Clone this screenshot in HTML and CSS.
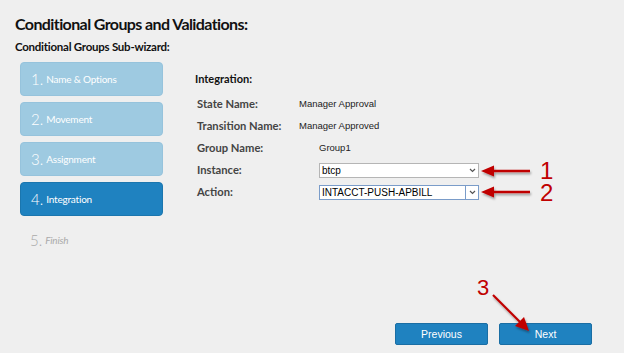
FILE: index.html
```html
<!doctype html>
<html lang="en">
<head>
  <meta charset="utf-8">
  <title>Conditional Groups and Validations</title>
  <link rel="stylesheet" href="styles.css">
</head>
<body>
  <div class="page">
    <h1 class="page-title">Conditional Groups and Validations:</h1>
    <h2 class="sub-title">Conditional Groups Sub-wizard:</h2>

    <div class="wizard">
      <div class="steps">
        <div class="step done"><span class="num">1.</span> Name &amp; Options</div>
        <div class="step done"><span class="num">2.</span> Movement</div>
        <div class="step done"><span class="num">3.</span> Assignment</div>
        <div class="step active"><span class="num">4.</span> Integration</div>
        <div class="step todo"><span class="num">5.</span> <em>Finish</em></div>
      </div>

      <div class="panel">
        <div class="panel-title">Integration:</div>
        <div class="row">
          <div class="label">State Name:</div>
          <div class="value">Manager Approval</div>
        </div>
        <div class="row">
          <div class="label">Transition Name:</div>
          <div class="value">Manager Approved</div>
        </div>
        <div class="row">
          <div class="label">Group Name:</div>
          <div class="value indent">Group1</div>
        </div>
        <div class="row">
          <div class="label">Instance:</div>
          <div class="select">
            <span class="select-text">btcp</span>
            <span class="select-arrow"><svg width="7" height="5" viewBox="0 0 7 5"><path d="M1 1 L3.5 3.5 L6 1" fill="none" stroke="#555" stroke-width="1.2"/></svg></span>
          </div>
        </div>
        <div class="row">
          <div class="label">Action:</div>
          <div class="select focused">
            <span class="select-text">INTACCT-PUSH-APBILL</span>
            <span class="select-arrow split"><svg width="7" height="5" viewBox="0 0 7 5"><path d="M1 1 L3.5 3.5 L6 1" fill="none" stroke="#555" stroke-width="1.2"/></svg></span>
          </div>
        </div>
      </div>
    </div>

    <div class="actions">
      <button class="btn">Previous</button>
      <button class="btn">Next</button>
    </div>

    <!-- callout annotations drawn over the screenshot -->
    <svg class="callouts" width="624" height="353" viewBox="0 0 624 353">
      <defs>
        <filter id="shadow" x="-20%" y="-50%" width="140%" height="200%">
          <feDropShadow dx="1" dy="2" stdDeviation="1.2" flood-color="#000" flood-opacity="0.35"/>
        </filter>
      </defs>
      <g fill="#c00000" stroke="#c00000" filter="url(#shadow)">
        <line x1="530" y1="171" x2="492" y2="171" stroke-width="2.4"/>
        <path d="M481 171 L494 165.5 L494 176.5 Z" stroke="none"/>
        <line x1="530" y1="192" x2="492" y2="192" stroke-width="2.4"/>
        <path d="M481 192 L494 186.5 L494 197.5 Z" stroke="none"/>
        <line x1="493" y1="295" x2="522" y2="324" stroke-width="2.2"/>
        <path d="M529 331 L515 326 L524 317 Z" stroke="none"/>
      </g>
      <g class="callout-num" fill="#c00000">
        <text x="540" y="179">1</text>
        <text x="540" y="201">2</text>
        <text class="small" x="477" y="295">3</text>
      </g>
    </svg>
  </div>
</body>
</html>
```

FILE: styles.css
```css
html, body {
  margin: 0;
  background: #efefef;
}
body {
  font-family: 'Lato', 'Open Sans', sans-serif;
  color: #111;
}
.page {
  position: relative;
  width: 624px;
  height: 353px;
  box-sizing: border-box;
  padding: 13px 0 0 15px;
  overflow: hidden;
}
.page-title {
  margin: 0;
  font-size: 16px;
  line-height: 21px;
  font-weight: 700;
  letter-spacing: -0.6px;
}
.sub-title {
  margin: 6px 0 0 0;
  font-size: 11.5px;
  line-height: 14px;
  font-weight: 700;
  letter-spacing: -0.25px;
}
.wizard {
  display: flex;
  margin-top: 8px;
}
.steps {
  display: flex;
  flex-direction: column;
  gap: 6px;
  margin-left: 5px;
  width: 143px;
}
.step {
  height: 34px;
  box-sizing: border-box;
  border-radius: 4px;
  padding-left: 10px;
  display: flex;
  align-items: center;
  font-size: 10px;
  letter-spacing: -0.2px;
  color: #fff;
}
.step .num {
  font-size: 15px;
  margin-right: 3px;
  font-weight: 300;
  letter-spacing: 0;
}
.step.done {
  background: #9ecae1;
  border: 1px solid #96c3dc;
}
.step.active {
  background: #1f82c0;
  border: 1px solid #1b76ae;
}
.step.todo {
  color: #aaa;
  padding-top: 2px;
}
.step.todo em {
  font-size: 10px;
}
.panel {
  margin-left: 32px;
  padding-top: 10px;
  font-size: 10.5px;
}
.panel-title {
  font-weight: 700;
  font-size: 11px;
  margin-bottom: 7px;
}
.row {
  display: flex;
  align-items: center;
  height: 22px;
}
.label {
  width: 102px;
  padding-left: 2px;
  font-weight: 700;
  color: #444;
  font-size: 11.2px;
}
.value {
  font-family: 'Liberation Sans', Arial, sans-serif;
  font-size: 9.5px;
  color: #222;
}
.value.indent {
  margin-left: 20px;
}
.select {
  margin-left: 20px;
  margin-top: 3px;
  width: 160px;
  height: 15px;
  box-sizing: border-box;
  background: #fff;
  border: 1px solid #b5b5b5;
  display: flex;
  align-items: center;
  font-family: 'Liberation Sans', Arial, sans-serif;
  font-size: 10px;
  color: #000;
}
.select.focused {
  border-color: #7a9cc9;
}
.select-text {
  flex: 1;
  padding-left: 2px;
}
.select-arrow {
  width: 12px;
  height: 100%;
  display: flex;
  align-items: center;
  justify-content: center;
}
.select-arrow.split {
  border-left: 1px solid #7a9cc9;
}
.actions {
  position: absolute;
  right: 32px;
  bottom: 8px;
  display: flex;
  gap: 11px;
}
.btn {
  width: 93px;
  height: 22px;
  background: #1f82c0;
  border: 1px solid #1a6ea4;
  border-radius: 2px;
  color: #fff;
  font-family: 'Liberation Sans', Arial, sans-serif;
  font-size: 10.5px;
  padding: 0;
}
.callouts {
  position: absolute;
  left: 0;
  top: 0;
  pointer-events: none;
}
.callout-num text {
  font-family: 'Liberation Sans', Arial, sans-serif;
  font-size: 24px;
}
.callout-num text.small {
  font-size: 22px;
}
```
